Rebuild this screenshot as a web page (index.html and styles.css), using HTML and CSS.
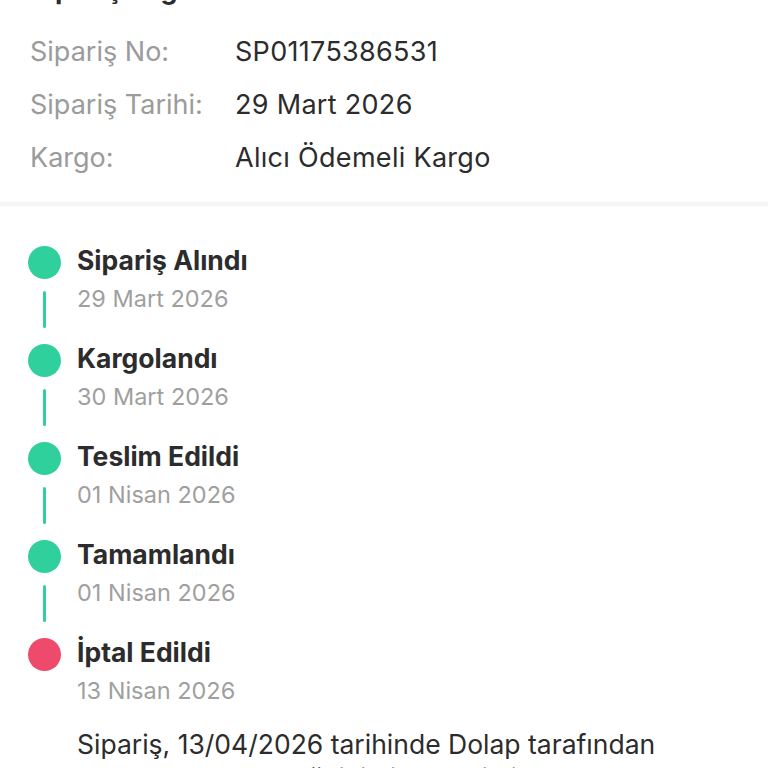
FILE: index.html
```html
<!DOCTYPE html>
<html lang="tr">
<head>
    <meta charset="UTF-8">
    <meta name="viewport" content="width=device-width, initial-scale=1.0">
    <title>Sipariş Detayı</title>
    <link rel="stylesheet" href="styles.css">
</head>
<body>
    <section class="order-info">
        <h2 class="section-title">Sipariş Bilgileri</h2>
        <div class="info-row"><span class="info-label">Sipariş No:</span><span class="info-value">SP01175386531</span></div>
        <div class="info-row"><span class="info-label">Sipariş Tarihi:</span><span class="info-value">29 Mart 2026</span></div>
        <div class="info-row"><span class="info-label">Kargo:</span><span class="info-value">Alıcı Ödemeli Kargo</span></div>
    </section>

    <div class="divider"></div>

    <section class="timeline">
        <div class="step">
            <div class="step-mark"><span class="dot"></span><span class="line"></span></div>
            <div class="step-body">
                <div class="step-title">Sipariş Alındı</div>
                <div class="step-date">29 Mart 2026</div>
            </div>
        </div>
        <div class="step">
            <div class="step-mark"><span class="dot"></span><span class="line"></span></div>
            <div class="step-body">
                <div class="step-title">Kargolandı</div>
                <div class="step-date">30 Mart 2026</div>
            </div>
        </div>
        <div class="step">
            <div class="step-mark"><span class="dot"></span><span class="line"></span></div>
            <div class="step-body">
                <div class="step-title">Teslim Edildi</div>
                <div class="step-date">01 Nisan 2026</div>
            </div>
        </div>
        <div class="step">
            <div class="step-mark"><span class="dot"></span><span class="line"></span></div>
            <div class="step-body">
                <div class="step-title">Tamamlandı</div>
                <div class="step-date">01 Nisan 2026</div>
            </div>
        </div>
        <div class="step step-last">
            <div class="step-mark"><span class="dot dot-cancel"></span></div>
            <div class="step-body">
                <div class="step-title">İptal Edildi</div>
                <div class="step-date">13 Nisan 2026</div>
                <p class="step-note">Sipariş, 13/04/2026 tarihinde Dolap tarafından ürün stokta olmadığı için iptal edildi.</p>
            </div>
        </div>
    </section>
</body>
</html>
```

FILE: styles.css
```css
body { margin: 0; background: #fff; font-family: Inter, "Noto Sans", sans-serif; color: #2c2c2c; overflow: hidden; }

.order-info { padding: 0 30px 17px 30px; margin-top: -26px; }
.section-title { margin: 0 0 19px 0; font-size: 27px; line-height: 32px; font-weight: 700; color: #2c2c2c; }
.info-row { display: flex; height: 53px; align-items: center; font-size: 27px; }
.info-label { width: 205px; color: #9b9b9b; }
.info-value { color: #2c2c2c; letter-spacing: 0.3px; }

.divider { height: 6px; background: linear-gradient(#fbfbfb, #f3f3f3 50%, #fbfbfb); }

.timeline { padding: 39px 30px 0 28px; }
.step { display: flex; gap: 16px; }
.step-mark { width: 33px; display: flex; flex-direction: column; align-items: center; }
.dot { width: 33px; height: 33px; border-radius: 50%; background: #2fd09c; }
.dot-cancel { background: #ee4b6c; }
.line { width: 3px; height: 37px; margin: 12px 0 16px; border-radius: 2px; background: #2fd09c; }

.step-body { flex: 1; }
.step-title { font-size: 26.5px; line-height: 31px; font-weight: 700; color: #2c2c2c; margin-top: -1px; }
.step-date { font-size: 23.5px; line-height: 36px; color: #9f9f9f; margin-top: 5px; }
.step-note { margin: 18px 60px 0 0; font-size: 26.5px; line-height: 34px; color: #2c2c2c; }
```
